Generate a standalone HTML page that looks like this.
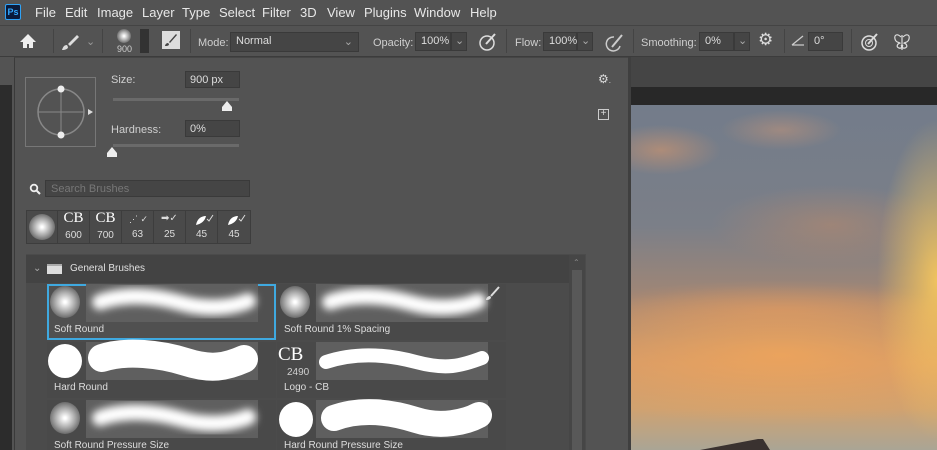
<!DOCTYPE html>
<html><head><style>
*{margin:0;padding:0;box-sizing:border-box}
html,body{width:937px;height:450px;overflow:hidden}
body{background:#535353;font-family:"Liberation Sans",sans-serif;color:#ddd;position:relative;font-size:12px}
.a{position:absolute}
.menu span{position:absolute;top:5px;font-size:13px;color:#e8e8e8}
.inp{position:absolute;background:#454545;border:1px solid #3a3a3a;color:#ddd;font-size:11px;padding:2px 5px}
.lbl{position:absolute;font-size:11px;color:#cfcfcf}
.sep{position:absolute;top:29px;width:1px;height:24px;background:#444}
.soft{background:radial-gradient(circle,#fff 5%,#aaa 45%,#666 75%,#666 100%)}
.tile{position:absolute;background:#494949}
.thumb{position:absolute;background:#5f5f5f}
.name{position:absolute;font-size:10px;color:#ddd}
</style></head><body>
<div class="a" style="left:0;top:0;width:937px;height:450px;overflow:hidden">
<!-- menu -->
<div class="a" style="left:5px;top:4px;width:16px;height:16px;background:#0a1b3b;border:1px solid #2fa3f7;border-radius:2px;color:#31a8ff;font-size:9px;font-weight:bold;line-height:14px;text-align:center">Ps</div>
<div class="menu">
<span style="left:35px">File</span><span style="left:65px">Edit</span><span style="left:97px">Image</span><span style="left:142px">Layer</span><span style="left:182px">Type</span><span style="left:219px">Select</span><span style="left:262px">Filter</span><span style="left:300px">3D</span><span style="left:327px">View</span><span style="left:364px">Plugins</span><span style="left:414px">Window</span><span style="left:470px">Help</span>
</div>
<!-- options bar -->
<div class="a" style="left:0;top:25px;width:937px;height:32px;background:#535353;border-top:1px solid #444;border-bottom:1px solid #3c3c3c"></div>
<svg class="a" style="left:19px;top:33px" width="18" height="16"><path d="M9 1L1 9h3v6h4v-4h2v4h4V9h3z" fill="#eee"/></svg>
<div class="sep" style="left:53px"></div>
<svg class="a" style="left:60px;top:33px" width="20" height="18"><path d="M17 2L8 11l2 2 9-9z" fill="#ddd"/><path d="M7 12c-3 0-4 2-5 5 3 0 6-1 6-3z" fill="#ddd"/></svg>
<div class="lbl" style="left:86px;top:35px;color:#999">⌄</div>
<div class="sep" style="left:102px"></div>
<div class="a soft" style="left:117px;top:29px;width:14px;height:14px;border-radius:50%"></div>
<div class="lbl" style="left:117px;top:44px;font-size:9px">900</div>
<div class="a" style="left:140px;top:29px;width:9px;height:24px;background:#333"></div>
<div class="a" style="left:162px;top:31px;width:18px;height:18px;background:#ddd"></div>
<svg class="a" style="left:164px;top:33px" width="14" height="14"><path d="M12 1L5 9l1 1 7-8zM4 10c-2 0-3 2-3 3 2 0 4 0 4-2z" fill="#444"/></svg>
<div class="sep" style="left:190px"></div>
<div class="lbl" style="left:198px;top:37px">Mode:</div>
<div class="inp" style="left:230px;top:32px;width:129px;height:20px">Normal<span style="float:right;color:#aaa">⌄</span></div>
<div class="lbl" style="left:373px;top:37px">Opacity:</div>
<div class="inp" style="left:415px;top:32px;width:36px;height:19px">100%</div>
<div class="inp" style="left:451px;top:32px;width:16px;height:19px;padding:1px 3px;color:#aaa">⌄</div>
<svg class="a" style="left:478px;top:32px" width="20" height="20"><circle cx="9" cy="11" r="7" fill="none" stroke="#ddd" stroke-width="1.5"/><path d="M8 12l9-10" stroke="#ddd" stroke-width="2"/></svg>
<div class="sep" style="left:506px"></div>
<div class="lbl" style="left:515px;top:37px">Flow:</div>
<div class="inp" style="left:543px;top:32px;width:34px;height:19px">100%</div>
<div class="inp" style="left:577px;top:32px;width:16px;height:19px;padding:1px 3px;color:#aaa">⌄</div>
<svg class="a" style="left:604px;top:32px" width="22" height="20"><path d="M10 5a7 7 0 1 0 6 9" fill="none" stroke="#ccc" stroke-width="1.5"/><path d="M8 15l10-12" stroke="#ccc" stroke-width="2"/></svg>
<div class="sep" style="left:633px"></div>
<div class="lbl" style="left:641px;top:37px">Smoothing:</div>
<div class="inp" style="left:699px;top:32px;width:35px;height:19px">0%</div>
<div class="inp" style="left:734px;top:32px;width:16px;height:19px;padding:1px 3px;color:#aaa">⌄</div>
<div class="a" style="left:758px;top:30px;font-size:17px;color:#ddd">⚙</div>
<div class="sep" style="left:784px"></div>
<svg class="a" style="left:791px;top:34px" width="14" height="12"><path d="M1 11h12M1 11L12 2" stroke="#ccc" stroke-width="1.3" fill="none"/></svg>
<div class="inp" style="left:808px;top:32px;width:35px;height:19px">0°</div>
<div class="sep" style="left:851px"></div>
<svg class="a" style="left:860px;top:32px" width="20" height="20"><circle cx="9" cy="11" r="7" fill="none" stroke="#ddd" stroke-width="1.5"/><circle cx="9" cy="11" r="3.5" fill="none" stroke="#ddd"/><path d="M8 12l9-10" stroke="#ddd" stroke-width="2"/></svg>
<svg class="a" style="left:892px;top:32px" width="20" height="20"><path d="M10 3v15M9 5C5 1 2 3 3 7s4 3 5 4c-3 1-4 4-1 5s3-2 2-3M11 5c4-4 7-2 6 2s-4 3-5 4c3 1 4 4 1 5s-3-2-2-3" fill="none" stroke="#ddd" stroke-width="1.2"/></svg>
<!-- right doc area -->
<div class="a" style="left:628px;top:57px;width:309px;height:30px;background:#454545"></div>
<div class="a" style="left:631px;top:87px;width:306px;height:18px;background:#282828"></div>
<div class="a" style="left:628px;top:57px;width:3px;height:393px;background:#3f3f3f"></div>
<div class="a" style="left:631px;top:105px;width:306px;height:345px;background:
radial-gradient(ellipse 60px 160px at 306px 175px,rgba(255,205,90,.85),transparent),
radial-gradient(ellipse 260px 70px at 150px 250px,rgba(240,165,90,.85),transparent),
radial-gradient(ellipse 200px 30px at 150px 205px,rgba(225,150,95,.55),transparent),
radial-gradient(ellipse 120px 40px at 200px 120px,rgba(200,140,100,.45),transparent),
radial-gradient(ellipse 60px 25px at 30px 45px,rgba(210,150,110,.6),transparent),
radial-gradient(ellipse 60px 20px at 150px 25px,rgba(200,150,120,.5),transparent),
linear-gradient(180deg,#737c8a 0%,#7b7f88 35%,#9f8676 55%,#d19a6c 75%,#cfa271 88%,#aaa595 100%)"></div>
<svg class="a" style="left:700px;top:435px" width="70" height="15"><path d="M0 15L58 4l5 0 7 11z" fill="#3a3230"/></svg>
<!-- left strip -->
<div class="a" style="left:0;top:57px;width:14px;height:28px;background:#535353"></div>
<div class="a" style="left:0;top:85px;width:12px;height:365px;background:#2c2c2c"></div>
<!-- brush panel -->
<div class="a" style="left:14px;top:57px;width:614px;height:393px;background:#535353;border-left:1px solid #3a3a3a;border-top:1px solid #454545"></div>
<div class="a" style="left:25px;top:77px;width:71px;height:70px;border:1px solid #777"></div>
<svg class="a" style="left:25px;top:77px" width="80" height="70"><circle cx="36" cy="35" r="23" fill="none" stroke="#888" stroke-width="1.5"/><path d="M13 35h46M36 12v46" stroke="#888"/><circle cx="36" cy="12" r="3.5" fill="#eee"/><circle cx="36" cy="58" r="3.5" fill="#eee"/><path d="M63 32v6l5-3z" fill="#ddd"/></svg>
<div class="lbl" style="left:111px;top:74px">Size:</div>
<div class="inp" style="left:185px;top:71px;width:55px;height:17px;padding:2px 4px">900 px</div>
<div class="a" style="left:113px;top:98px;width:126px;height:3px;background:#6a6a6a"></div>
<svg class="a" style="left:220px;top:100px" width="14" height="12"><path d="M7 1L2 7v4h10V7z" fill="#eee"/></svg>
<div class="lbl" style="left:111px;top:124px">Hardness:</div>
<div class="inp" style="left:185px;top:120px;width:55px;height:17px;padding:2px 4px">0%</div>
<div class="a" style="left:113px;top:144px;width:126px;height:3px;background:#6a6a6a"></div>
<svg class="a" style="left:105px;top:146px" width="14" height="12"><path d="M7 1L2 7v4h10V7z" fill="#eee"/></svg>
<div class="a" style="left:598px;top:72px;font-size:12px;color:#ddd">⚙<span style="font-size:8px">.</span></div>
<div class="a" style="left:598px;top:109px;width:11px;height:11px;border:1px solid #ccc;font-size:10px;line-height:8px;text-align:center;color:#ddd">+</div>
<svg class="a" style="left:29px;top:183px" width="12" height="12"><circle cx="5" cy="5" r="3.3" fill="none" stroke="#eee" stroke-width="1.8"/><path d="M7.5 7.5l3.5 3.5" stroke="#eee" stroke-width="2"/></svg>
<div class="inp" style="left:45px;top:180px;width:205px;height:17px;padding:2px 5px;color:#777;font-size:11px">Search Brushes</div>
<!-- presets row -->
<div class="a" style="left:26px;top:210px;width:225px;height:34px;background:#3d3d3d"></div>
<div class="a" style="left:27px;top:211px;width:30px;height:32px;background:#4a4a4a"></div>
<div class="a soft" style="left:29px;top:214px;width:26px;height:26px;border-radius:50%"></div>
<div class="a" style="left:58px;top:211px;width:31px;height:32px;background:#4a4a4a;text-align:center;font-family:'Liberation Serif',serif;font-size:15px;color:#fff;line-height:15px">CB<div style="font-family:'Liberation Sans';font-size:10px;color:#ddd;line-height:14px;margin-top:3px">600</div></div>
<div class="a" style="left:90px;top:211px;width:31px;height:32px;background:#4a4a4a;text-align:center;font-family:'Liberation Serif',serif;font-size:15px;color:#fff;line-height:15px">CB<div style="font-family:'Liberation Sans';font-size:10px;color:#ddd;line-height:14px;margin-top:3px">700</div></div>
<div class="a" style="left:122px;top:211px;width:31px;height:32px;background:#4a4a4a;text-align:center;font-size:10px;color:#ddd;padding-top:18px">63</div>
<div class="a" style="left:129px;top:214px;font-size:9px;color:#ddd">⋰ ✓</div>
<div class="a" style="left:154px;top:211px;width:31px;height:32px;background:#4a4a4a;text-align:center;font-size:10px;color:#ddd;padding-top:18px">25</div>
<div class="a" style="left:161px;top:213px;font-size:10px;color:#ddd">➡✓</div>
<div class="a" style="left:186px;top:211px;width:31px;height:32px;background:#4a4a4a;text-align:center;font-size:10px;color:#ddd;padding-top:18px">45</div>
<svg class="a" style="left:194px;top:213px" width="20" height="14"><path d="M2 12C3 6 7 3 12 3 11 8 7 11 2 12z" fill="#fff"/><path d="M13 6l2 2 4-6" stroke="#ddd" fill="none"/></svg>
<div class="a" style="left:218px;top:211px;width:32px;height:32px;background:#4a4a4a;text-align:center;font-size:10px;color:#ddd;padding-top:18px">45</div>
<svg class="a" style="left:226px;top:213px" width="20" height="14"><path d="M2 12C3 6 7 3 12 3 11 8 7 11 2 12z" fill="#fff"/><path d="M13 6l2 2 4-6" stroke="#ddd" fill="none"/></svg>
<!-- list -->
<div class="a" style="left:26px;top:254px;width:560px;height:196px;background:#4b4b4b"></div>
<div class="a" style="left:26px;top:255px;width:543px;height:28px;background:#434343"></div>
<div class="a" style="left:569px;top:255px;width:16px;height:195px;background:#464646"></div>
<div class="a" style="left:572px;top:270px;width:10px;height:180px;background:#585858"></div>
<div class="a" style="left:573px;top:258px;font-size:8px;color:#888">⌃</div>
<div class="a" style="left:33px;top:263px;font-size:10px;color:#aaa">⌄</div>
<div class="a" style="left:47px;top:264px;width:15px;height:10px;background:#ddd;border-top:2px solid #aaa"></div>
<div class="lbl" style="left:70px;top:263px;font-size:10px;color:#e0e0e0">General Brushes</div>
<!-- tiles -->
<div class="tile" style="left:47px;top:284px;width:229px;height:56px;border:2px solid #3fa9e0;background:#505050"></div>
<div class="tile" style="left:277px;top:284px;width:229px;height:56px"></div>
<div class="tile" style="left:47px;top:342px;width:229px;height:56px"></div>
<div class="tile" style="left:277px;top:342px;width:229px;height:56px"></div>
<div class="tile" style="left:47px;top:400px;width:229px;height:56px"></div>
<div class="tile" style="left:277px;top:400px;width:229px;height:56px"></div>
<div class="thumb" style="left:86px;top:284px;width:172px;height:38px"></div>
<div class="thumb" style="left:316px;top:284px;width:172px;height:38px"></div>
<div class="thumb" style="left:86px;top:342px;width:172px;height:38px"></div>
<div class="thumb" style="left:316px;top:342px;width:172px;height:38px"></div>
<div class="thumb" style="left:86px;top:400px;width:172px;height:38px"></div>
<div class="thumb" style="left:316px;top:400px;width:172px;height:38px"></div>
<div class="a soft" style="left:50px;top:286px;width:30px;height:32px;border-radius:50%"></div>
<div class="a soft" style="left:280px;top:286px;width:30px;height:32px;border-radius:50%"></div>
<div class="a" style="left:48px;top:344px;width:34px;height:34px;border-radius:50%;background:#fff"></div>
<div class="a" style="left:278px;top:344px;font-family:'Liberation Serif',serif;font-size:19px;color:#fff">CB</div>
<div class="lbl" style="left:287px;top:367px;font-size:10px">2490</div>
<div class="a soft" style="left:50px;top:402px;width:30px;height:32px;border-radius:50%"></div>
<div class="a" style="left:279px;top:402px;width:34px;height:35px;border-radius:50%;background:#fff"></div>
<svg class="a" style="left:86px;top:284px" width="420" height="160">
<defs><filter id="b" x="-20%" y="-100%" width="140%" height="300%"><feGaussianBlur stdDeviation="4"/></filter></defs>
<path d="M14 18C40 9 70 12 95 19S145 24 162 17" stroke="#fff" stroke-width="16" fill="none" stroke-linecap="round" filter="url(#b)"/>
<path d="M244 18C270 9 300 12 325 19S375 24 392 17" stroke="#fff" stroke-width="16" fill="none" stroke-linecap="round" filter="url(#b)"/>
<path d="M16 74C40 66 75 70 100 78S140 83 158 75" stroke="#fff" stroke-width="28" fill="none" stroke-linecap="round"/>
<path d="M240 78C270 68 300 70 330 78S375 82 396 74" stroke="#fff" stroke-width="14" fill="none" stroke-linecap="round"/>
<path d="M14 134C40 125 70 128 95 135S145 140 162 133" stroke="#fff" stroke-width="16" fill="none" stroke-linecap="round" filter="url(#b)"/>
<path d="M248 134C275 124 305 128 330 136S380 138 393 131" stroke="#fff" stroke-width="26" fill="none" stroke-linecap="round"/>
<path d="M405 12l8-9" stroke="#ddd" stroke-width="2"/><path d="M404 12c-3 0-4 3-4 4 3 0 5-1 5-3z" fill="#ddd"/>
</svg>
<div class="name" style="left:54px;top:324px">Soft Round</div>
<div class="name" style="left:284px;top:324px">Soft Round 1% Spacing</div>
<div class="name" style="left:54px;top:382px">Hard Round</div>
<div class="name" style="left:284px;top:382px">Logo - CB</div>
<div class="name" style="left:54px;top:440px">Soft Round Pressure Size</div>
<div class="name" style="left:284px;top:440px">Hard Round Pressure Size</div>
</div>
</body></html>
